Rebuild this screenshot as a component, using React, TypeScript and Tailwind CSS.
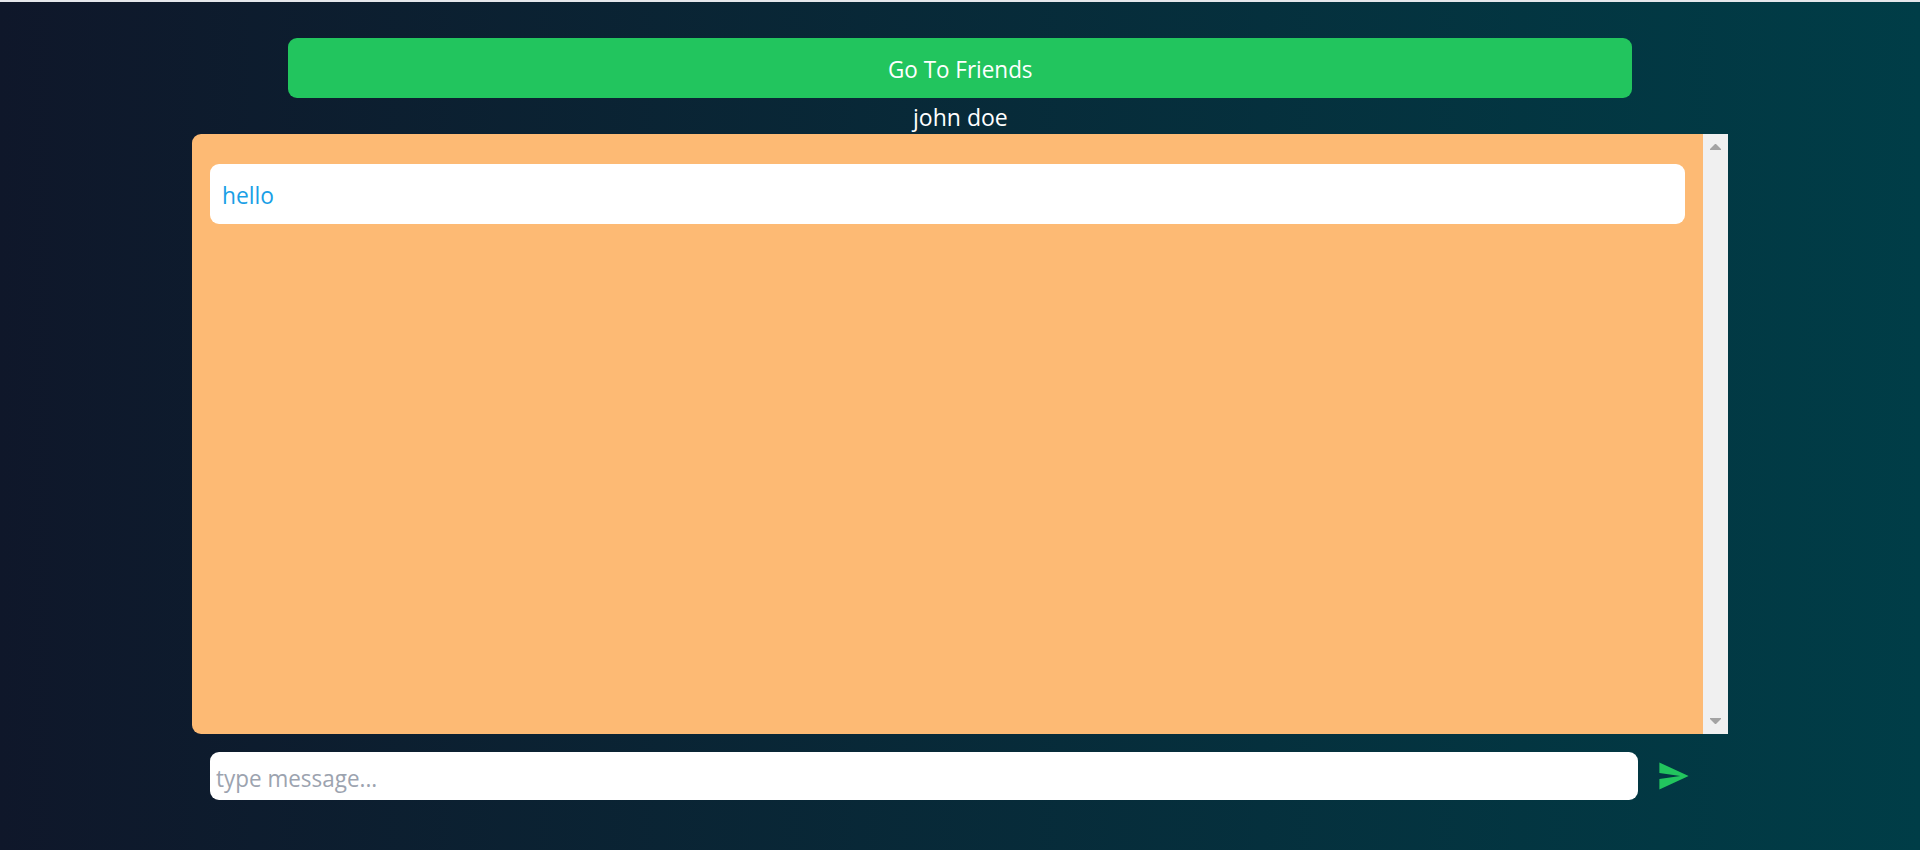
import { IoMdSend } from "react-icons/io";

export default function App() {
  return (
    <div className="h-[850px] w-full overflow-hidden border-t-2 border-[#e5e7eb] bg-[linear-gradient(to_right,#0f172a,#003d47)] pt-9 font-['Open_Sans','Noto_Sans',sans-serif] text-[24px] leading-9">
      <button className="mx-auto block h-[60px] w-[1344px] rounded-[9px] bg-[#22c55e] pt-[2px] text-white">
        <span className="inline-block origin-center scale-x-[0.935]">Go To Friends</span>
      </button>
      <h1 className="h-9 pt-px text-center text-white">
        <span className="inline-block origin-center scale-x-[0.96]">john doe</span>
      </h1>
      <main className="mx-auto w-[1536px]">
        <section className="flex h-[600px] overflow-hidden rounded-l-[9px] bg-[#fdba74]">
          <div className="flex-1 px-[18px] pt-[30px]">
            <div className="h-[60px] rounded-[9px] bg-white px-3 pt-[13px] text-[#1a9fe6]">
              <span className="inline-block origin-left scale-x-[0.95]">hello</span>
            </div>
          </div>
          <div className="flex w-[25px] flex-col items-center justify-between bg-[#f0f0f0] pt-[10px] pb-[10px]">
            <svg width="11" height="6" viewBox="0 0 11 6" fill="#a3a3a3"><path d="M0 6V5L5 0H6L11 5V6Z" /></svg>
            <svg width="11" height="6" viewBox="0 0 11 6" fill="#a3a3a3"><path d="M0 0V1L5 6H6L11 1V0Z" /></svg>
          </div>
        </section>
        <form className="flex items-center gap-[18px] pt-[18px] pl-[18px]">
          <div className="h-12 w-[1428px] rounded-[9px] bg-white px-1.5">
            <input
              className="h-12 w-full origin-left scale-x-[0.936] bg-transparent pt-[2px] text-gray-900 outline-none placeholder:text-[#9ca3af]"
              placeholder="type message..."
            />
          </div>
          <button type="button" aria-label="Send" className="text-[#22c55e]">
            <IoMdSend size={36} />
          </button>
        </form>
      </main>
    </div>
  );
}
